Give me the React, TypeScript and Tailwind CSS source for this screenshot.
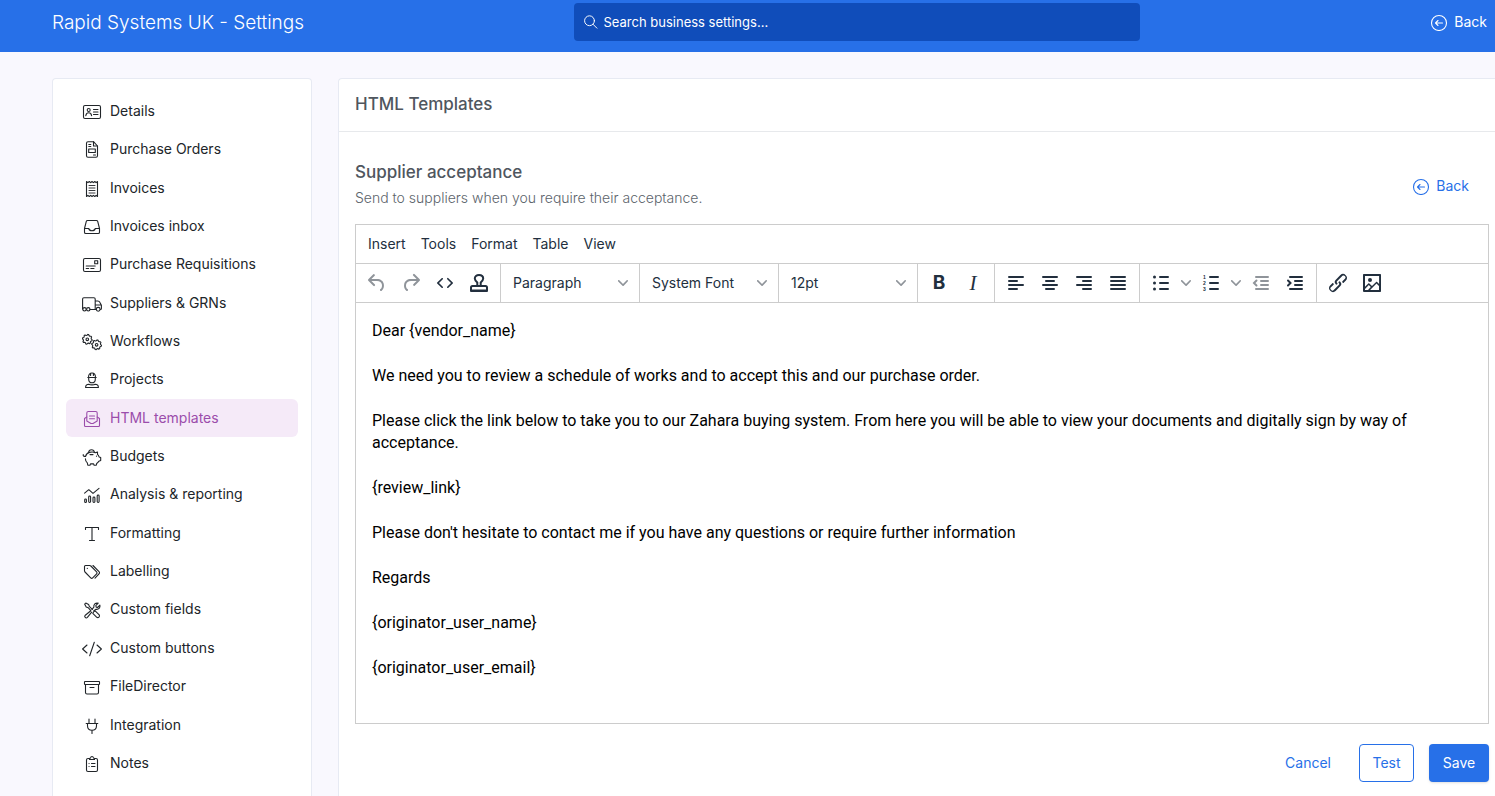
import { ReactNode, useState } from "react";

const uiFont = "font-['Inter','Liberation_Sans',sans-serif]";
const contentFont = "font-['Roboto','Liberation_Sans',sans-serif]";

// 20x20 line icons for the settings menu
function LineIcon({ children }: { children: ReactNode }) {
    return (
        <svg
            width="20"
            height="20"
            viewBox="0 0 20 20"
            fill="none"
            stroke="currentColor"
            strokeWidth="1.1"
            strokeLinecap="round"
            strokeLinejoin="round"
            className="shrink-0"
            aria-hidden="true"
        >
            {children}
        </svg>
    );
}

function gearPoints(cx: number, cy: number) {
    const points: string[] = [];
    for (let i = 0; i < 32; i++) {
        const r = i % 4 < 2 ? 4.9 : 4;
        const a = ((i + 0.5) / 32) * Math.PI * 2;
        points.push(`${(cx + r * Math.cos(a)).toFixed(2)},${(cy + r * Math.sin(a)).toFixed(2)}`);
    }
    return points.join(" ");
}

const menuItems: { label: string; icon: ReactNode }[] = [
    {
        label: "Details",
        icon: (
            <>
                <rect x="1.5" y="4.5" width="17" height="13" rx="1.5" />
                <circle cx="6.7" cy="9" r="1.5" />
                <path d="M3.8 14.6c.4-2 1.4-2.8 2.9-2.8s2.5.8 2.9 2.8M11.5 8.5h4.5M11.5 11h4.5M11.5 13.5h4.5" />
            </>
        ),
    },
    {
        label: "Purchase Orders",
        icon: (
            <>
                <path d="M11.5 2.7H6c-1 0-1.5.6-1.5 1.5v12.6c0 .9.5 1.5 1.5 1.5h8c1 0 1.5-.6 1.5-1.5V7z" />
                <path d="M11.5 2.7V7h4M6.8 5.5h2M6.8 7.5h2M11.5 16h2" />
                <rect x="6.7" y="10" width="6.6" height="3.5" />
            </>
        ),
    },
    {
        label: "Invoices",
        icon: (
            <>
                <path d="M4.5 3.5l1.4 1.2 1.4-1.2 1.4 1.2L10 3.5l1.4 1.2 1.4-1.2 1.3 1.2 1.4-1.2v15l-1.4-1.2-1.3 1.2-1.4-1.2-1.4 1.2-1.3-1.2-1.4 1.2-1.4-1.2-1.4 1.2z" />
                <path d="M7 7.5h6M7 10h6M7 12.5h6M7 15h6" strokeWidth="0.9" />
            </>
        ),
    },
    {
        label: "Invoices inbox",
        icon: (
            <path d="M2.5 12.5L4.3 5.4c.2-.6.5-.9 1.2-.9h9c.7 0 1 .3 1.2.9l1.8 7.1v3.7c0 .8-.5 1.3-1.3 1.3H3.8c-.8 0-1.3-.5-1.3-1.3zh4.2c.4 1.6 1.4 2.2 3.3 2.2s2.9-.6 3.3-2.2h4.2" />
        ),
    },
    {
        label: "Purchase Requisitions",
        icon: (
            <>
                <rect x="1.5" y="4.5" width="17" height="13" rx="1.5" />
                <rect x="12.7" y="6.7" width="3" height="3" />
                <path d="M4.2 12h9M4.2 14.5h2.5M8.8 14.5H12" />
            </>
        ),
    },
    {
        label: "Suppliers & GRNs",
        icon: (
            <>
                <path d="M.6 16V6c0-.8.5-1.3 1.3-1.3h10c.8 0 1.3.5 1.3 1.3v10.5H8M13.2 8h2.6c1 0 1.6.4 2 1.3l1.6 3v3.2c0 .7-.3 1-1 1M13.2 12h6M13.3 16.5h.8" />
                <circle cx="2.5" cy="16.3" r="1.7" />
                <circle cx="6.3" cy="16.3" r="1.7" />
                <circle cx="16.2" cy="16.3" r="1.9" />
            </>
        ),
    },
    {
        label: "Workflows",
        icon: (
            <>
                <polygon points={gearPoints(5.3, 8.3)} />
                <circle cx="5.3" cy="8.3" r="1.3" />
                <polygon points={gearPoints(14.6, 13.8)} />
                <circle cx="14.6" cy="13.8" r="1.3" />
            </>
        ),
    },
    {
        label: "Projects",
        icon: (
            <>
                <path d="M5.8 8.5h8.4M6.5 8.5c0-3 1.4-4.5 3.5-4.5s3.5 1.5 3.5 4.5M8.6 4.5v2M11.4 4.5v2M6.7 8.5v1.7c0 2.2 1.4 3.6 3.3 3.6s3.3-1.4 3.3-3.6V8.5" />
                <path d="M3.6 18.5c0-2.2 1-3.2 3.2-3.2 1.2.8 5.2.8 6.4 0 2.2 0 3.2 1 3.2 3.2z" />
            </>
        ),
    },
    {
        label: "HTML templates",
        icon: (
            <>
                <path d="M4.8 13V5c0-.9.6-1.5 1.5-1.5h7.4c.9 0 1.5.6 1.5 1.5v8L11 15.5H9z" />
                <path d="M7.5 8h5M7.5 10.7h5M4.8 9L2.5 10.5v7c0 .6.4 1 1 1h13c.6 0 1-.4 1-1v-7L15.2 9" />
            </>
        ),
    },
    {
        label: "Budgets",
        icon: (
            <>
                <path d="M1.2 8.5c-.2 1.4.5 2 2.3 2 .6-2 2-3.6 4-4.1 2-.5 4.3-.4 5.8.4l2.200-.8v2.400c.8.7 1.3 1.5 1.6 2.5l1.600.6v3l-1.900.8c-.5 1-1.200 1.600-2.100 2.200l-.4 1.700h-2.200l-.5-1.300H8.500l-.5 1.300H5.800l-.5-2.300c-1.200-1-1.900-2.300-1.900-4.200" />
                <path d="M6.6 6.4c.2-1.7 1.3-2.7 2.9-2.7s2.7 1 2.9 2.7M8 8.6h3M14.5 10v.3" />
            </>
        ),
    },
    {
        label: "Analysis & reporting",
        icon: (
            <>
                <path d="M2.6 9.2l4.2-3.5 4.2 3.7 6-5" />
                <rect x="2.7" y="15" width="1.7" height="3.5" rx=".8" />
                <rect x="6.7" y="12" width="1.9" height="6.5" rx=".9" />
                <rect x="11" y="13" width="1.9" height="5.5" rx=".9" />
                <rect x="15.2" y="11" width="1.9" height="7.5" rx=".9" />
            </>
        ),
    },
    {
        label: "Formatting",
        icon: <path d="M3.5 6.5v-2h13v2M10 4.5v13M7.5 17.5h5" />,
    },
    {
        label: "Labelling",
        icon: (
            <>
                <path d="M2.5 5.5v4.3c0 .5.2.9.5 1.2l5.7 5.8c.6.6 1.4.6 2 0l3.9-3.9c.6-.6.6-1.4 0-2L8.9 5c-.3-.3-.8-.5-1.3-.5H3.5c-.6 0-1 .4-1 1z" />
                <path d="M11 4.5l6 6.1c.7.7.7 1.5 0 2.2l-4 4.3M5.3 7.3v.1" />
            </>
        ),
    },
    {
        label: "Custom fields",
        icon: (
            <>
                <path d="M3.8 4l2.8 1.4.7 2 3 3M3.8 4L2.7 5.2l1.5 2.7 2 .8 2.6 3M11.6 13l1.3-1.4 4.3 4.3c1 1.6-.8 3.4-2.4 2.4l-4-4z" />
                <path d="M16.2 4.2l-2.4 2.5.4 1.4 1.4.4 2.3-2.4c.6 2.7-1.2 4.8-4.2 4.2l-2 1.7M16.2 4.2c-2.8-.6-4.9 1.3-4.3 4L10 10.3M8.5 12l-5.2 4.2c-1.6 1.6.6 3.7 2.1 2.2l4.3-5.3" />
            </>
        ),
    },
    {
        label: "Custom buttons",
        icon: <path d="M5 7L.6 11 5 15M15 7l4.4 4-4.4 4M12.3 4.3L7.7 17.7" />,
    },
    {
        label: "FileDirector",
        icon: (
            <path d="M3 5.5h14c.3 0 .5.2.5.5v2c0 .3-.2.5-.5.5H3c-.3 0-.5-.2-.5-.5V6c0-.3.2-.5.5-.5zM3.5 8.5v8c0 .9.5 1.5 1.5 1.5h10c1 0 1.5-.6 1.5-1.5v-8M8 11.5h4" />
        ),
    },
    {
        label: "Integration",
        icon: <path d="M7 4v4M13 4v4M4.2 8.5h11.6M5.5 8.5v2.3c0 2.7 1.8 4.5 4.5 4.5s4.5-1.8 4.5-4.5V8.5M10 15.500v3" />,
    },
    {
        label: "Notes",
        icon: (
            <>
                <path d="M7 5.5H6c-1 0-1.5.6-1.5 1.5v10c0 1 .5 1.5 1.5 1.5h8c1 0 1.5-.5 1.5-1.5V7c0-.9-.5-1.5-1.5-1.5h-1" />
                <path d="M7.5 6.500v-1l1-.5c.2-1 .7-1.5 1.5-1.5s1.300.5 1.500 1.500l1 .5v1zM7 10.5h.1M9.5 10.5H13M7 13.5h.1M9.5 13.5H13" />
            </>
        ),
    },
];

const templateText = [
    "Dear {vendor_name}",
    "We need you to review a schedule of works and to accept this and our purchase order.",
    "Please click the link below to take you to our Zahara buying system. From here you will be able to view your documents and digitally sign by way of acceptance.",
    "{review_link}",
    "Please don't hesitate to contact me if you have any questions or require further information",
    "Regards",
    "{originator_user_name}",
    "{originator_user_email}",
];

function BackIcon() {
    return (
        <svg width="18" height="18" viewBox="0 0 18 18" fill="none" stroke="currentColor" strokeWidth="1.1" strokeLinecap="round" strokeLinejoin="round" aria-hidden="true">
            <circle cx="9" cy="10" r="7.5" />
            <path d="M12.5 10h-7M8 7.5L5.5 10 8 12.5" />
        </svg>
    );
}

function Chevron() {
    return (
        <svg width="10" height="10" viewBox="0 0 10 10" fill="#8f949a" aria-hidden="true">
            <path d="M8.7 2.2c.3-.3.8-.3 1 0 .4.4.4.9 0 1.2L5.7 7.8c-.3.3-.9.3-1.2 0L.2 3.4a.8.8 0 010-1.2c.3-.3.8-.3 1.1 0L5 6l3.7-3.8z" />
        </svg>
    );
}

function ToolButton({ label, disabled, children }: { label: string; disabled?: boolean; children: ReactNode }) {
    return (
        <button
            type="button"
            aria-label={label}
            disabled={disabled}
            className="flex h-[34px] w-[34px] items-center justify-center rounded-sm text-[#222f3e] hover:bg-gray-100 disabled:text-[#8f949a]"
        >
            {children}
        </button>
    );
}

function Glyph({ d }: { d: string }) {
    return (
        <svg width="24" height="24" viewBox="0 0 24 24" fill="currentColor" aria-hidden="true">
            <path d={d} />
        </svg>
    );
}

function Lines({ d, children }: { d: string; children?: ReactNode }) {
    return (
        <svg width="24" height="24" viewBox="0 0 24 24" fill="none" stroke="currentColor" strokeWidth="2" strokeLinecap="round" aria-hidden="true">
            <path d={d} />
            {children}
        </svg>
    );
}

function ListArrow({ label }: { label: string }) {
    return (
        <button type="button" aria-label={label} className="flex h-[34px] w-4 items-center justify-center">
            <Chevron />
        </button>
    );
}

function ToolSelect({ label, options }: { label: string; options: string[] }) {
    return (
        <div className="relative w-[139px] border-r border-[#ccc]">
            <select
                aria-label={label}
                className="h-[38px] w-full appearance-none bg-transparent pr-7 pl-3 text-sm text-[#222f3e] outline-none"
            >
                {options.map((option) => (
                    <option key={option}>{option}</option>
                ))}
            </select>
            <span className="pointer-events-none absolute inset-y-0 right-[11px] flex items-center">
                <Chevron />
            </span>
        </div>
    );
}

const toolGroup = "flex items-center border-r border-[#ccc] px-1";

function Toolbar() {
    return (
        <div className="flex h-[39px] border-b border-[#ccc]">
            <div className={toolGroup}>
                <ToolButton label="Undo" disabled>
                    <Glyph d="M6.4 8H12c3.7 0 6.2 2 6.8 5.1.6 2.7-.4 5.6-2.3 6.8a1 1 0 01-1-1.8c1.1-.6 1.8-2.7 1.4-4.6-.5-2.1-2.1-3.5-4.9-3.5H6.4l3.3 3.3a1 1 0 11-1.4 1.4l-5-5a1 1 0 010-1.4l5-5a1 1 0 011.4 1.4L6.4 8z" />
                </ToolButton>
                <ToolButton label="Redo" disabled>
                    <Glyph d="M17.6 10H12c-2.8 0-4.4 1.4-4.9 3.5-.4 2 .3 4 1.4 4.6a1 1 0 11-1 1.8c-2-1.2-2.9-4.1-2.3-6.8.6-3 3-5.1 6.8-5.1h5.6l-3.3-3.3a1 1 0 111.4-1.4l5 5a1 1 0 010 1.4l-5 5a1 1 0 01-1.4-1.4l3.3-3.3z" />
                </ToolButton>
                <ToolButton label="Source code">
                    <Glyph d="M9.8 15.7c.3.3.3.8 0 1-.3.4-.9.4-1.2 0l-4.4-4.1a.8.8 0 010-1.2l4.4-4.2c.3-.3.9-.3 1.2 0 .3.3.3.8 0 1.1L6 12l3.8 3.7zM14.2 15.7c-.3.3-.3.8 0 1 .4.4.9.4 1.2 0l4.4-4.1c.3-.3.3-.9 0-1.2l-4.4-4.2a.8.8 0 00-1.2 0c-.3.3-.3.8 0 1.1L18 12l-3.8 3.7z" />
                </ToolButton>
                <ToolButton label="Insert tag">
                    <svg width="24" height="24" viewBox="0 0 24 24" fill="none" stroke="currentColor" strokeWidth="2" strokeLinejoin="round" aria-hidden="true">
                        <path d="M10.3 15v-3.5C8.7 10 7.8 9 7.8 7.5 7.8 5.4 9.5 4 12 4s4.2 1.4 4.2 3.5c0 1.5-.9 2.5-2.5 4V15M4 20v-3.5c0-.9.5-1.5 1.5-1.5h13c1 0 1.5.6 1.5 1.5V20z" />
                        <path d="M4 19.5h16" />
                    </svg>
                </ToolButton>
            </div>
            <ToolSelect label="Block format" options={["Paragraph", "Heading 1", "Heading 2"]} />
            <ToolSelect label="Font" options={["System Font", "Arial", "Georgia"]} />
            <ToolSelect label="Font size" options={["12pt", "14pt", "18pt"]} />
            <div className={toolGroup}>
                <ToolButton label="Bold">
                    <span className="text-[19px] leading-6 font-bold">B</span>
                </ToolButton>
                <ToolButton label="Italic">
                    <span className="font-['Liberation_Serif',serif] text-[21px] leading-6 italic">I</span>
                </ToolButton>
            </div>
            <div className={toolGroup}>
                <ToolButton label="Align left">
                    <Lines d="M5 6h14M5 10h8M5 14h14M5 18h8" />
                </ToolButton>
                <ToolButton label="Align center">
                    <Lines d="M5 6h14M8 10h8M5 14h14M8 18h8" />
                </ToolButton>
                <ToolButton label="Align right">
                    <Lines d="M5 6h14M11 10h8M5 14h14M11 18h8" />
                </ToolButton>
                <ToolButton label="Justify">
                    <Lines d="M5 6h14M5 10h14M5 14h14M5 18h14" />
                </ToolButton>
            </div>
            <div className={toolGroup}>
                <ToolButton label="Bullet list">
                    <Lines d="M11 6h8M11 12h8M11 18h8">
                        <g fill="currentColor" stroke="none">
                            <circle cx="5.500" cy="6" r="1.500" />
                            <circle cx="5.500" cy="12" r="1.500" />
                            <circle cx="5.500" cy="18" r="1.500" />
                        </g>
                    </Lines>
                </ToolButton>
                <ListArrow label="Bullet list styles" />
                <ToolButton label="Numbered list">
                    <Lines d="M11 6h8M11 12h8M11 18h8">
                        <g fill="currentColor" stroke="none" fontFamily="Liberation Sans" fontSize="5" fontWeight="700">
                            <text x="4" y="8">1</text>
                            <text x="4" y="14">2</text>
                            <text x="4" y="20">3</text>
                        </g>
                    </Lines>
                </ToolButton>
                <ListArrow label="Numbered list styles" />
                <ToolButton label="Decrease indent" disabled>
                    <Lines d="M7 6h12M12 10h7M12 14h7M7 18h12M7.5 9.5L5 12l2.5 2.5" />
                </ToolButton>
                <ToolButton label="Increase indent">
                    <Lines d="M7 6h12M12 10h7M12 14h7M7 18h12M5 9.5L7.5 12 5 14.5" />
                </ToolButton>
            </div>
            <div className="flex items-center px-1">
                <ToolButton label="Link">
                    <Glyph d="M6.2 12.3a1 1 0 011.4 1.4l-2.1 2a2 2 0 102.7 2.8l4.8-4.8a1 1 0 000-1.4 1 1 0 111.4-1.3 2.9 2.9 0 010 4L9.6 20a3.9 3.9 0 01-5.5-5.5l2-2zm11.6-.6a1 1 0 01-1.4-1.4l2-2a2 2 0 10-2.6-2.8L11 10.3a1 1 0 000 1.4A1 1 0 119.6 13a2.9 2.9 0 010-4L14.4 4a3.9 3.9 0 015.5 5.5l-2 2z" />
                </ToolButton>
                <ToolButton label="Image">
                    <Glyph d="M5 15.7l3.3-3.2c.3-.3.7-.3 1 0L12 15l4.1-4c.3-.4.8-.4 1 0l2 1.9V5H5v10.7zM5 18V19h3l2.8-2.9-2-2L5 17.9zm14-3l-2.5-2.4-6.4 6.5H19v-4zM4 3h16c.6 0 1 .4 1 1v16c0 .6-.4 1-1 1H4a1 1 0 01-1-1V4c0-.6.4-1 1-1zm6 8a2 2 0 100-4 2 2 0 000 4z" />
                </ToolButton>
            </div>
        </div>
    );
}

export default function App() {
    const [active, setActive] = useState("HTML templates");
    const [search, setSearch] = useState("");

    return (
        <div className={`flex min-h-screen flex-col bg-[#f9f8fe] text-sm text-[#212529] ${uiFont}`}>
            {/* Top bar */}
            <header className="flex h-[52px] items-start bg-[#2770e8] pt-[3px] pr-2 pl-[52px] text-white">
                <h1 className="w-[522px] text-[19px] leading-10 font-light">Rapid Systems UK - Settings</h1>
                <label className="flex h-[38px] max-w-[566px] flex-1 items-center gap-1.5 rounded bg-[#104dba] px-2.5">
                    <svg width="14" height="14" viewBox="0 0 14 14" fill="none" stroke="currentColor" strokeWidth="1" strokeLinecap="round" aria-hidden="true">
                        <circle cx="5.7" cy="5.7" r="5.1" />
                        <path d="M9.4 9.4l4 4" />
                    </svg>
                    <input
                        type="text"
                        aria-label="Search business settings"
                        value={search}
                        onChange={(e) => setSearch(e.target.value)}
                        placeholder="Search business settings..."
                        className="w-full bg-transparent text-[13px] placeholder-white outline-none"
                    />
                </label>
                <a href="#back" className="ml-auto flex h-[38px] items-center gap-1.5">
                    <BackIcon />
                    Back
                </a>
            </header>

            <div className="flex flex-1 gap-[26px] pt-[26px] pl-[52px]">
                {/* Settings menu */}
                <nav className="w-[260px] shrink-0 rounded-t border border-b-0 border-[#e7eaf3] bg-white px-[13px] pt-[13px]">
                    <ul className="flex min-h-[690px] flex-col justify-between">
                        {menuItems.map((item) => (
                            <li key={item.label}>
                                <a
                                    href="#settings"
                                    onClick={() => setActive(item.label)}
                                    className={`flex h-[38px] items-center gap-2 rounded-md px-4 ${
                                        active === item.label ? "bg-[#f5eaf8] text-[#9b4dab]" : ""
                                    }`}
                                >
                                    <LineIcon>{item.icon}</LineIcon>
                                    {item.label}
                                </a>
                            </li>
                        ))}
                    </ul>
                </nav>

                {/* Template editor */}
                <main className="min-w-0 flex-1 rounded-tl border-t border-l border-[#e7eaf3] bg-white">
                    <h2 className="border-b border-[#e7e9ec] px-4 pt-[13px] pb-[15px] text-[17px] leading-6 font-medium text-[#4f565e]">
                        HTML Templates
                    </h2>
                    <div className="pt-7 pr-1.5 pl-4">
                        <div className="flex items-center justify-between pr-5">
                            <div>
                                <h3 className="text-[17px] leading-6 font-medium text-[#4f565e]">Supplier acceptance</h3>
                                <p className="pt-1 pb-4 leading-5 font-light text-[#5c646b]">
                                    Send to suppliers when you require their acceptance.
                                </p>
                            </div>
                            <a href="#templates" className="flex items-center gap-1.5 pb-3 text-[#2770e8]">
                                <BackIcon />
                                Back
                            </a>
                        </div>

                        <div className="border border-[#ccc]">
                            <div className="flex h-[39px] items-center gap-[7px] border-b border-[#ccc] px-2 text-[#222f3e]">
                                {["Insert", "Tools", "Format", "Table", "View"].map((menu) => (
                                    <button key={menu} type="button" className="px-1 hover:bg-gray-100">
                                        {menu}
                                    </button>
                                ))}
                            </div>
                            <Toolbar />
                            <div
                                contentEditable
                                suppressContentEditableWarning
                                role="textbox"
                                aria-label="Template text"
                                aria-multiline="true"
                                className={`flex min-h-[420px] flex-col gap-[23px] px-4 pt-[17px] pb-4 text-base leading-[22px] text-black outline-none ${contentFont}`}
                            >
                                {templateText.map((line) => (
                                    <p key={line}>{line}</p>
                                ))}
                            </div>
                        </div>

                        <div className="flex justify-end pt-5 pb-[14px]">
                            <button type="button" className="h-[38px] px-[14px] text-[#2770e8]">
                                Cancel
                            </button>
                            <button
                                type="button"
                                className="ml-[14px] h-[38px] w-[55px] rounded-sm border border-[#2770e8] text-[#2770e8]"
                            >
                                Test
                            </button>
                            <button
                                type="button"
                                className="ml-[15px] h-[38px] w-[60px] rounded-sm bg-[#2770e8] text-white shadow-sm"
                            >
                                Save
                            </button>
                        </div>
                    </div>
                </main>
            </div>
        </div>
    );
}
